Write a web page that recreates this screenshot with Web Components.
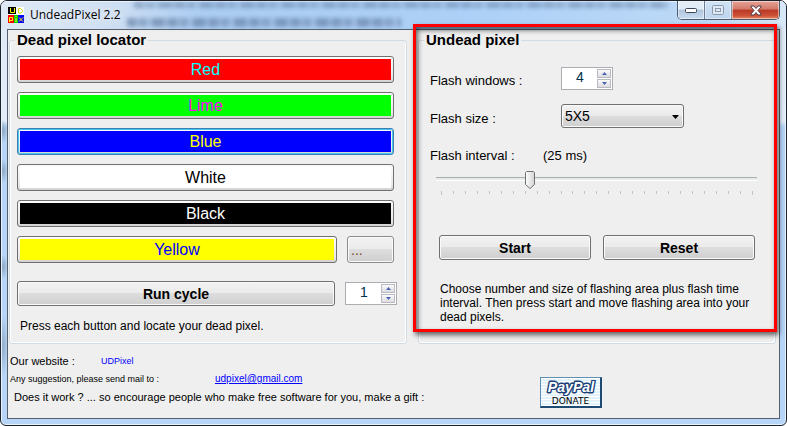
<!DOCTYPE html>
<html lang="en">
<head>
<meta charset="utf-8">
<title>UndeadPixel 2.2</title>
<style>
  body {
    margin: 0;
    background: #fff;
    color: #000;
    font-family: "Liberation Sans", Arial, sans-serif;
    font-size: 13px;
    line-height: 16px;
  }
</style>
</head>
<body>
<pixel-app></pixel-app>

<script>
  function defineComponent(name, html, setup) {
    const template = document.createElement("template");
    template.innerHTML = html;

    class Component extends HTMLElement {
      constructor() {
        super();
        this.attachShadow({ mode: "open" });
        this.shadowRoot.appendChild(template.content.cloneNode(true));
      }

      connectedCallback() {
        if (setup) setup(this, this.shadowRoot);
      }
    }

    customElements.define(name, Component);
  }

  // Window frame with title bar and caption buttons
  defineComponent("app-window", `
    <style>
      :host {
        display: block;
        box-sizing: border-box;
        border: 1px solid #1d222b;
        border-radius: 7px 7px 6px 6px;
        padding: 0 6px 6px;
        overflow: hidden;
        background:
          radial-gradient(ellipse 5px 12px at 2px 130px, #8fa6c4, transparent),
          radial-gradient(ellipse 5px 12px at 2px 170px, #8fa6c4, transparent),
          radial-gradient(ellipse 5px 12px at 2px 266px, #8fa6c4, transparent),
          radial-gradient(ellipse 5px 30px at 2px 345px, #93abc9, transparent),
          linear-gradient(#dfe9f5 0, #e4eefa 120px, #b6d5f7 126px, #b6d5f7 100%);
        box-shadow: inset 0 0 0 1px #e6f3ff;
      }
      .titlebar {
        position: relative;
        display: flex;
        align-items: center;
        height: 28px;
        margin: 0 -6px;
        padding: 0 6px 0 7px;
        background: linear-gradient(90deg, #dfe9f5 0, #cfdff2 110px, #accdf2 200px, #acd0f7 60%, #bdd9f6 90%, #d8e8f8);
        box-shadow: inset 0 1px #e9f4ff;
      }
      .titlebar::before, .titlebar::after {
        content: "";
        position: absolute;
        filter: blur(2px);
        background: repeating-linear-gradient(90deg, #6a86aa 0 9px, #8fadd0 9px 12px, #7793b8 12px 20px, #98b7da 20px 25px, #6883a8 25px 37px, #8aa9cd 37px 41px);
      }
      .titlebar::before { left: 17%; right: 15%; top: 1px; height: 6px; opacity: .6; }
      .titlebar::after { left: 16%; right: 49%; top: 17px; height: 9px; opacity: .7; }
      svg { display: block; }
      .icon { z-index: 1; }
      h1 {
        z-index: 1;
        flex: 1;
        margin: 0 0 0 6px;
        font: 12px/16px "Open Sans", sans-serif;
        text-shadow: 0 0 6px #fff;
      }
      .caption {
        z-index: 1;
        align-self: flex-start;
        display: flex;
        border: 1px solid #4c5b70;
        border-top: 0;
        border-radius: 0 0 5px 5px;
        overflow: hidden;
      }
      .caption button {
        display: grid;
        place-items: center;
        width: 27px;
        height: 18px;
        padding: 0;
        border: 0;
        border-right: 1px solid #6b7c94;
        background: linear-gradient(#e3edf8 0 45%, #b0c4dc 50%, #c8dcf1);
        box-shadow: inset 0 0 0 1px #ffffff80;
      }
      .caption .max { background: linear-gradient(#d2e3f5, #bdd4ed); border-color: #8493a8; }
      .caption .close {
        width: 47px;
        border: 0;
        background: linear-gradient(#e5a397 0, #d47a6a 45%, #b93a25 50%, #cd5036 80%, #e28662);
      }
      .client {
        border: 1px solid #55606e;
        background: #efefef;
      }
    </style>
    <header class="titlebar">
      <svg class="icon" width="16" height="16" viewBox="0 0 16 16" aria-hidden="true">
        <path fill="#fff" d="M0 0h16v16H0z"/>
        <path fill="#000" d="M0 0h8v7H0z"/>
        <path fill="#f00" d="M0 8h6v8H0z"/>
        <path fill="#00d800" d="M6 8h4v8H6z"/>
        <path fill="#00f" d="M10 8h6v8h-6z"/>
        <path fill="none" stroke="#ff0" d="M2.500 1v4.500h4V1"/>
        <path fill="none" stroke="#d8d000" d="M10.500 1.500h2l2 2v1l-1.500 1.500h-2.500z"/>
        <path fill="none" stroke="#ff0" d="M1.500 15v-4.500h3v3h-3M8 11v4M8 9v1M11 10.500l4 4M15 10.500l-4 4"/>
      </svg>
      <h1><slot name="title"></slot></h1>
      <div class="caption">
        <button type="button" aria-label="Minimize">
          <svg width="12" height="6" viewBox="0 0 12 6"><rect x=".5" y="1.500" width="11" height="4" rx="1" fill="#fff" stroke="#3f4858"/></svg>
        </button>
        <button type="button" class="max" aria-label="Maximize">
          <svg width="12" height="10" viewBox="0 0 12 10" fill="#dfe9f4" stroke="#8998ac"><rect x=".5" y=".5" width="11" height="9" rx="1"/><rect x="3.500" y="3.500" width="5" height="3"/></svg>
        </button>
        <button type="button" class="close" aria-label="Close">
          <svg width="12" height="11" viewBox="0 0 12 11"><path d="M1 1h3l2 2.500L8 1h3v1L8 5.500l3 3.500v1H8L6 7.500 4 10H1V9l3-3.500L1 2z" fill="#fff" stroke="#4d3b46"/></svg>
        </button>
      </div>
    </header>
    <main class="client"><slot></slot></main>
  `);

  defineComponent("group-box", `
    <style>
      :host { display: block; }
      fieldset {
        box-sizing: border-box;
        height: 100%;
        min-width: 0;
        margin: 0;
        padding: 0;
        border: 1px solid #d0dbe4;
        border-radius: 3px;
        box-shadow: inset -1px -1px #fff, inset 1px 0 #fff;
      }
      legend {
        margin-left: 5px;
        padding: 0 2px;
        font-size: 15px;
        font-weight: bold;
        line-height: 18px;
      }
    </style>
    <fieldset>
      <legend></legend>
      <slot></slot>
    </fieldset>
  `, (host, root) => {
    root.querySelector("legend").textContent = host.getAttribute("heading");
  });

  defineComponent("swatch-button", `
    <style>
      :host { display: block; flex: 1; }
      button {
        display: block;
        box-sizing: border-box;
        width: 100%;
        height: 27px;
        padding: 2px;
        border: 1px solid #707070;
        border-radius: 3px;
        background: linear-gradient(#fcfcfc, #e8e8e8 80%, #d0d0d0);
        font: 16px/21px "Liberation Sans", Arial, sans-serif;
        color: var(--ink);
      }
      :host([focused]) button {
        border-color: #3c7fb1;
        box-shadow: inset 0 0 0 1px #48c4ee;
      }
      span { display: block; background: var(--swatch); }
    </style>
    <button type="button"><span><slot></slot></span></button>
  `);

  defineComponent("push-button", `
    <style>
      :host { display: block; }
      button {
        box-sizing: border-box;
        width: 100%;
        height: 25px;
        padding: 0 3px;
        border: 1px solid #707070;
        border-radius: 3px;
        background: linear-gradient(#f2f2f2 0, #ebebeb 48%, #dddddd 50%, #cfcfcf);
        box-shadow: inset 0 0 0 1px #fafafa;
        color: #000;
        font: bold 14px/20px "Liberation Sans", Arial, sans-serif;
      }
      :host([small]) button {
        height: 27px;
        border-color: #8c8c8c;
        color: #7a4a20;
        font-weight: normal;
        text-align: left;
      }
    </style>
    <button type="button"><slot></slot></button>
  `);

  // Number box, with its label in a column in front when it has one
  defineComponent("number-field", `
    <style>
      :host { display: flex; align-items: center; }
      label { width: 131px; padding-top: 5px; }
      label:empty { display: none; }
      .box {
        box-sizing: border-box;
        display: flex;
        width: 52px;
        height: 23px;
        padding: 1px;
        border: 1px solid #abadb3;
        background: #fff;
      }
      input {
        flex: 1;
        min-width: 0;
        padding: 0 0 3px;
        border: 0;
        background: none;
        color: #00304c;
        font: 14px/16px "Liberation Sans", Arial, sans-serif;
        text-align: center;
        appearance: textfield;
      }
      input::-webkit-inner-spin-button { display: none; }
      .arrows { display: grid; gap: 1px; width: 14px; }
      .arrows button {
        display: grid;
        place-items: center;
        padding: 0;
        border: 1px solid #b9bbc2;
        background: linear-gradient(#fafafa, #dcdce0);
      }
      svg { display: block; fill: #4a63b0; }
    </style>
    <label for="value"></label>
    <div class="box">
      <input id="value" type="number">
      <div class="arrows">
        <button type="button" aria-label="Up"><svg width="5" height="3" viewBox="0 0 5 3"><path d="M0 3h5L2.500 0z"/></svg></button>
        <button type="button" aria-label="Down"><svg width="5" height="3" viewBox="0 0 5 3"><path d="M0 0h5L2.500 3z"/></svg></button>
      </div>
    </div>
  `, (host, root) => {
    const input = root.querySelector("input");
    const [up, down] = root.querySelectorAll(".arrows button");
    root.querySelector("label").textContent = host.getAttribute("label");
    input.value = host.getAttribute("value");
    if (host.hasAttribute("hint")) input.setAttribute("aria-label", host.getAttribute("hint"));
    up.addEventListener("click", () => input.stepUp());
    down.addEventListener("click", () => input.stepDown());
  });

  defineComponent("select-field", `
    <style>
      :host { display: flex; align-items: center; }
      label { width: 131px; padding-top: 5px; }
      .box { position: relative; width: 123px; }
      select {
        display: block;
        box-sizing: border-box;
        width: 100%;
        height: 24px;
        padding: 0 3px;
        border: 1px solid #707070;
        border-radius: 3px;
        appearance: none;
        background: linear-gradient(#f2f2f2 0, #ebebeb 48%, #dddddd 50%, #cfcfcf);
        box-shadow: inset 0 0 0 1px #fafafa;
        color: #000;
        font: 14px/20px "Liberation Sans", Arial, sans-serif;
      }
      svg { position: absolute; right: 5px; top: 11px; pointer-events: none; }
    </style>
    <label for="choice"></label>
    <div class="box">
      <select id="choice"></select>
      <svg width="7" height="4" viewBox="0 0 7 4"><path d="M0 0h7L3.500 4z"/></svg>
    </div>
  `, (host, root) => {
    root.querySelector("label").textContent = host.getAttribute("label");
    const select = root.querySelector("select");
    host.getAttribute("options").split(",").forEach((text) => select.add(new Option(text)));
  });

  defineComponent("track-bar", `
    <style>
      :host { display: block; }
      .head { display: flex; }
      label { width: 113px; }
      .track { margin: 7px 18px 0 6px; }
      input {
        display: block;
        width: 100%;
        height: 18px;
        margin: 0;
        appearance: none;
        background: linear-gradient(#a9aeae 0 1px, #e7eaea 1px 3px, #fff 3px) 0 6px / 100% 4px no-repeat;
      }
      input::-webkit-slider-thumb {
        appearance: none;
        width: 10px;
        height: 18px;
        background: url('data:image/svg+xml,<svg xmlns="http://www.w3.org/2000/svg" width="10" height="18"><defs><linearGradient id="g"><stop stop-color="%23fff"/><stop offset="1" stop-color="%23d2d2d2"/></linearGradient></defs><path d="M1.500.5h7l1 1v12L5 17.500.5 13.500v-12z" fill="url(%23g)" stroke="%23707070"/></svg>');
      }
      .ticks { display: flex; justify-content: space-between; margin: 2px 4px 0 5px; }
      .ticks i { width: 1px; height: 3px; background: #c2c2c2; }
      .ticks i:first-child, .ticks i:last-child { height: 4px; }
    </style>
    <div class="head"><label for="range"></label><output for="range"></output></div>
    <div class="track">
      <input id="range" type="range" min="5" max="75">
      <div class="ticks"></div>
    </div>
  `, (host, root) => {
    const input = root.querySelector("input");
    const output = root.querySelector("output");
    const show = () => { output.textContent = `(${input.value} ms)`; };
    root.querySelector("label").textContent = host.getAttribute("label");
    root.querySelector(".ticks").innerHTML = "<i></i>".repeat(27);
    input.value = host.getAttribute("value");
    input.addEventListener("input", show);
    show();
  });

  // Red marker frame laid over whatever it wraps
  defineComponent("marker-frame", `
    <style>
      :host { display: grid; position: relative; min-width: 0; }
      .frame {
        position: absolute;
        inset: -7px -1px 12px -5px;
        border: 3px solid #f00;
        box-shadow: 2px 3px 5px #0009, inset 2px 3px 5px #0009;
        pointer-events: none;
      }
    </style>
    <slot></slot>
    <div class="frame"></div>
  `);

  defineComponent("donate-button", `
    <style>
      :host { display: block; }
      button {
        display: flex;
        flex-direction: column;
        align-items: center;
        box-sizing: border-box;
        width: 62px;
        height: 31px;
        padding: 2px 0 0;
        border: 1px solid #5f8fb0;
        border-right: 2px solid #1d4a72;
        border-bottom: 2px solid #1d4a72;
        background: repeating-linear-gradient(#fff 0 1px, #e2f3fb 1px 3px);
        color: #000;
        font-family: "Liberation Sans", Arial, sans-serif;
      }
      svg { display: block; }
      span { font: 9px/10px "DejaVu Sans", sans-serif; }
    </style>
    <button type="button">
      <svg width="56" height="17" viewBox="0 0 56 17" role="img" aria-label="PayPal">
        <text x="28" y="13" text-anchor="middle" font-size="15" font-weight="bold" font-style="italic" fill="#fff" stroke="#1c3f77" stroke-width="3" stroke-linejoin="round" paint-order="stroke">PayPal</text>
      </svg>
      <span>DONATE</span>
    </button>
  `);

  defineComponent("pixel-app", `
    <style>
      :host { display: block; }
      .groups {
        display: grid;
        grid-template-columns: 398fr 358fr;
        gap: 11px;
        padding: 1px 3px 0 1px;
      }
      .locator { padding: 7px 9px 9px 7px; }
      .colors { display: grid; gap: 9px; margin-right: 3px; }
      .row { display: flex; gap: 10px; }
      .row .more { width: 47px; }
      .run { margin-top: 17px; }
      .run push-button { flex: 1; padding-top: 1px; }
      .locator p { margin: 12px 3px 0; font-size: 12px; }
      .undead { padding: 18px 0 0 11px; }
      .undead select-field { margin: 14px 0 20px; }
      .actions {
        display: grid;
        grid-template-columns: 1fr 1fr;
        gap: 12px;
        margin: 40px 20px 0 9px;
      }
      .undead p { margin: 22px 16px 0 10px; font-size: 12px; line-height: 14px; }
      footer {
        display: flex;
        align-items: flex-end;
        padding: 9px 2px 10px;
        font-size: 11px;
      }
      .lines { display: grid; gap: 2px; width: 530px; margin-bottom: 3px; }
      .lines div { display: flex; }
      .site span { width: 91px; }
      .mail span { width: 205px; }
      .site a, .mail span { font-size: 9px; }
      .mail a { font-size: 10px; }
      .site a { text-decoration: none; }
      a { color: #00f; }
      .gift { padding-left: 4px; }
    </style>
    <app-window>
      <span slot="title">UndeadPixel 2.2</span>
      <div class="groups">
        <group-box heading="Dead pixel locator">
          <div class="locator">
            <div class="colors">
              <swatch-button style="--swatch: #f00; --ink: #0ff">Red</swatch-button>
              <swatch-button style="--swatch: #0f0; --ink: #f0f">Lime</swatch-button>
              <swatch-button focused style="--swatch: #00f; --ink: #ff0">Blue</swatch-button>
              <swatch-button style="--swatch: #fff; --ink: #000">White</swatch-button>
              <swatch-button style="--swatch: #000; --ink: #fff">Black</swatch-button>
              <div class="row">
                <swatch-button style="--swatch: #ff0; --ink: #00f">Yellow</swatch-button>
                <push-button class="more" small>...</push-button>
              </div>
            </div>
            <div class="row run">
              <push-button>Run cycle</push-button>
              <number-field hint="Number of cycles" value="1"></number-field>
            </div>
            <p>Press each button and locate your dead pixel.</p>
          </div>
        </group-box>
        <marker-frame>
          <group-box heading="Undead pixel">
            <div class="undead">
              <number-field label="Flash windows :" value="4"></number-field>
              <select-field label="Flash size :" options="5X5"></select-field>
              <track-bar label="Flash interval :" value="25"></track-bar>
              <div class="actions">
                <push-button>Start</push-button>
                <push-button>Reset</push-button>
              </div>
              <p>Choose number and size of flashing area plus flash time interval. Then press start and move flashing area into your dead pixels.</p>
            </div>
          </group-box>
        </marker-frame>
      </div>
      <footer>
        <div class="lines">
          <div class="site"><span>Our website :</span><a href="#udpixel">UDPixel</a></div>
          <div class="mail"><span>Any suggestion, please send mail to :</span><a href="mailto:udpixel@gmail.com">udpixel@gmail.com</a></div>
          <div class="gift">Does it work ? ... so encourage people who make free software for you, make a gift :</div>
        </div>
        <donate-button></donate-button>
      </footer>
    </app-window>
  `);
</script>
</body>
</html>
